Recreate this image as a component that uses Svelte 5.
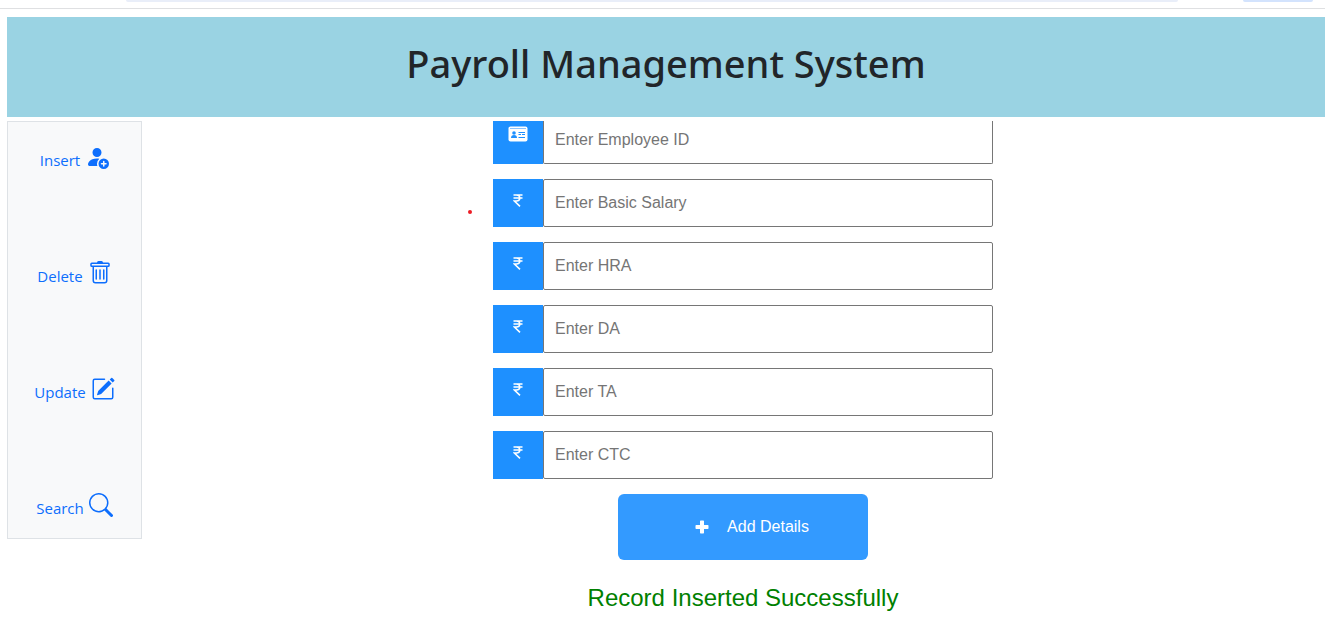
<script>
  const actions = [
    {
      label: 'Insert',
      kind: 'insert',
      paths: [
        'M12.5 16a3.5 3.5 0 1 0 0-7 3.5 3.5 0 0 0 0 7Zm.5-5v1h1a.5.5 0 0 1 0 1h-1v1a.5.5 0 0 1-1 0v-1h-1a.5.5 0 0 1 0-1h1v-1a.5.5 0 0 1 1 0Zm-2-6a3 3 0 1 1-6 0 3 3 0 0 1 6 0Z',
        'M2 13c0 1 1 1 1 1h5.256A4.493 4.493 0 0 1 8 12.5a4.49 4.49 0 0 1 1.544-3.393C9.077 9.038 8.564 9 8 9c-5 0-6 3-6 4Z'
      ]
    },
    {
      label: 'Delete',
      kind: 'delete',
      paths: [
        'M5.5 5.5A.5.5 0 0 1 6 6v6a.5.5 0 0 1-1 0V6a.5.5 0 0 1 .5-.5Zm2.5 0a.5.5 0 0 1 .5.5v6a.5.5 0 0 1-1 0V6a.5.5 0 0 1 .5-.5Zm3 .5a.5.5 0 0 0-1 0v6a.5.5 0 0 0 1 0V6Z',
        'M14.5 3a1 1 0 0 1-1 1H13v9a2 2 0 0 1-2 2H5a2 2 0 0 1-2-2V4h-.5a1 1 0 0 1-1-1V2a1 1 0 0 1 1-1H6a1 1 0 0 1 1-1h2a1 1 0 0 1 1 1h3.5a1 1 0 0 1 1 1v1ZM4.118 4 4 4.059V13a1 1 0 0 0 1 1h6a1 1 0 0 0 1-1V4.059L11.882 4H4.118ZM2.5 3h11V2h-11v1Z'
      ]
    },
    {
      label: 'Update',
      kind: 'update',
      paths: [
        'M15.502 1.94a.5.5 0 0 1 0 .706L14.459 3.69l-2-2L13.502.646a.5.5 0 0 1 .707 0l1.293 1.293zm-1.75 2.456-2-2L4.939 9.21a.5.5 0 0 0-.121.196l-.805 2.414a.25.25 0 0 0 .316.316l2.414-.805a.5.5 0 0 0 .196-.12l6.813-6.814z',
        'M1 13.5A1.5 1.5 0 0 0 2.5 15h11a1.5 1.5 0 0 0 1.5-1.5v-6a.5.5 0 0 0-1 0v6a.5.5 0 0 1-.5.5h-11a.5.5 0 0 1-.5-.5v-11a.5.5 0 0 1 .5-.5H9a.5.5 0 0 0 0-1H2.5A1.5 1.5 0 0 0 1 2.5v11z'
      ]
    },
    {
      label: 'Search',
      kind: 'search',
      paths: [
        'M11.742 10.344a6.5 6.5 0 1 0-1.397 1.398h-.001c.03.04.062.078.098.115l3.85 3.85a1 1 0 0 0 1.415-1.414l-3.85-3.85a1.007 1.007 0 0 0-.115-.1zM12 6.5a5.5 5.5 0 1 1-11 0 5.5 5.5 0 0 1 11 0z'
      ]
    }
  ];

  const fields = [
    { id: 'employee-id', label: 'Enter Employee ID', icon: 'card' },
    { id: 'basic-salary', label: 'Enter Basic Salary', icon: 'rupee' },
    { id: 'hra', label: 'Enter HRA', icon: 'rupee' },
    { id: 'da', label: 'Enter DA', icon: 'rupee' },
    { id: 'ta', label: 'Enter TA', icon: 'rupee' },
    { id: 'ctc', label: 'Enter CTC', icon: 'rupee' }
  ];
</script>

<div class="page">
  <div class="toolbar">
    <span class="address"></span>
    <span class="chip"></span>
  </div>

  <header class="banner">
    <h1>Payroll Management System</h1>
  </header>

  <div class="body">
    <nav class="sidebar">
      {#each actions as action}
        <a href="#{action.kind}">
          <span>{action.label}</span>
          <svg viewBox="0 0 16 16" aria-hidden="true">
            {#each action.paths as d}
              <path {d} fill-rule="evenodd" />
            {/each}
          </svg>
        </a>
      {/each}
    </nav>

    <main>
      <form onsubmit={(e) => e.preventDefault()}>
        {#each fields as field}
          <div class="field" class:clipped={field.icon === 'card'}>
            <label for={field.id} aria-label={field.label}>
              {#if field.icon === 'card'}
                <svg class="card" viewBox="0 0 20 16" aria-hidden="true">
                  <rect x="0.5" y="0.5" width="19" height="15" rx="2" fill="#fff" />
                  <path d="M2 2.5h16" stroke="#8cc4ff" stroke-width="1" />
                  <circle cx="6" cy="7" r="1.8" fill="#1e90ff" />
                  <path d="M3 12c0-2 1-3 3-3s3 1 3 3z" fill="#1e90ff" />
                  <path d="M10.5 6.5H17M10.5 8.5h2.5M14 8.5h3M10.5 11.5H17" stroke="#1e90ff" stroke-width="1" />
                </svg>
              {:else}
                <svg class="rupee" viewBox="0 0 10 13" aria-hidden="true">
                  <path d="M0.5 1H9.5M0.5 4H9.5M1 1H3.4C7.9 1 7.9 7 3.4 7H1.4L7 12.3" fill="none" stroke="#fff" stroke-width="1.6" />
                </svg>
              {/if}
            </label>
            <input id={field.id} type="text" placeholder={field.label} />
          </div>
        {/each}

        <button type="submit">
          <svg viewBox="0 0 14 14" aria-hidden="true">
            <path d="M5.7 0.5h2.6a.7.7 0 0 1 .7.7V5h3.8a.7.7 0 0 1 .7.7v2.6a.7.7 0 0 1-.7.7H9v3.8a.7.7 0 0 1-.7.7H5.7a.7.7 0 0 1-.7-.7V9H1.2a.7.7 0 0 1-.7-.7V5.7a.7.7 0 0 1 .7-.7H5V1.2a.7.7 0 0 1 .7-.7z" />
          </svg>
          <span>Add Details</span>
        </button>
        <p role="status">Record Inserted Successfully</p>
      </form>
      <i class="marker"></i>
    </main>
  </div>
</div>

<style>
  :global(body) {
    margin: 0;
    background: #fff;
  }

  .page,
  .page * {
    box-sizing: border-box;
  }

  .page {
    overflow: hidden;
    font-family: 'Open Sans', 'Noto Sans', sans-serif;
    color: #212529;
  }

  .toolbar {
    display: flex;
    justify-content: space-between;
    height: 9px;
    padding: 0 12px 0 126px;
    border-bottom: 1px solid #dfe0e2;
  }

  .address,
  .chip {
    height: 2px;
    background: #e9eef9;
    border-radius: 0 0 8px 8px;
  }

  .address {
    flex: 1;
    margin-right: 65px;
  }

  .chip {
    width: 70px;
    background: #d3e3fd;
  }

  .banner {
    display: flex;
    justify-content: center;
    height: 100px;
    margin: 8px 0 4px 7px;
    padding-top: 22px;
    background: #9ad3e3;
  }

  h1 {
    margin: 0;
    font-family: 'Noto Sans', 'Open Sans', sans-serif;
    font-size: 38px;
    font-weight: 500;
    line-height: 48px;
  }

  .body {
    display: flex;
    align-items: flex-start;
    padding-left: 7px;
  }

  .sidebar {
    display: flex;
    flex-direction: column;
    gap: 76px;
    width: 135px;
    padding: 18px 0 10px;
    background: #f8f9fa;
    border: 1px solid #dee2e6;
  }

  .sidebar a {
    display: flex;
    justify-content: center;
    gap: 5px;
    height: 40px;
    color: #0d6efd;
    font-size: 15px;
    line-height: 40px;
    text-decoration: none;
  }

  .sidebar svg {
    flex: none;
    width: 24px;
    height: 24px;
    margin-top: 5px;
    fill: currentColor;
  }

  main {
    position: relative;
    flex: 1;
    padding-left: 19px;
  }

  form {
    display: flex;
    flex-direction: column;
    align-items: center;
    font-family: 'Liberation Sans', Arial, sans-serif;
  }

  .field {
    display: flex;
    width: 100%;
    max-width: 500px;
    height: 48px;
    margin-bottom: 15px;
  }

  .field label {
    display: flex;
    justify-content: center;
    flex: none;
    width: 50px;
    padding-top: 15px;
    background: #1e90ff;
  }

  .field input {
    flex: 1;
    min-width: 0;
    padding: 0 11px;
    border: 1px solid #767676;
    border-radius: 2px;
    background: #fff;
    font: inherit;
    font-size: 16px;
  }

  .field input::placeholder {
    color: #757575;
    opacity: 1;
  }

  .clipped {
    height: 43px;
  }

  .clipped label {
    padding-top: 5px;
  }

  .clipped input {
    padding-bottom: 5px;
    border-top: 0;
    border-top-left-radius: 0;
    border-top-right-radius: 0;
  }

  .card {
    width: 20px;
    height: 16px;
  }

  .rupee {
    width: 10px;
    height: 13px;
  }

  button {
    display: flex;
    align-items: center;
    justify-content: center;
    gap: 18px;
    width: 250px;
    height: 66px;
    padding: 0 0 0 18px;
    border: 0;
    border-radius: 6px;
    background: #339aff;
    color: #fff;
    font: inherit;
    font-size: 16px;
  }

  button svg {
    width: 14px;
    height: 14px;
    fill: currentColor;
  }

  p {
    margin: 20px 0 0;
    color: #008000;
    font-size: 24px;
    line-height: 36px;
  }

  .marker {
    position: absolute;
    top: 89px;
    left: 326px;
    width: 4px;
    height: 4px;
    border-radius: 50%;
    background: #ed1c24;
  }
</style>
